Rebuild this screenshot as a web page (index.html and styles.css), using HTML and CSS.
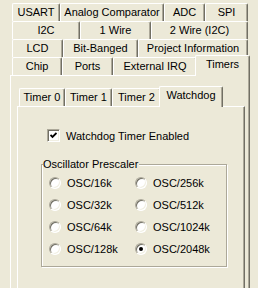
FILE: index.html
```html
<!DOCTYPE html>
<html lang="en">
<head>
    <meta charset="UTF-8">
    <title>Timers</title>
    <link rel="stylesheet" href="styles.css">
</head>
<body>
    <div class="tabs">
        <div class="tab-row row1">
            <div class="tab">USART</div>
            <div class="tab">Analog Comparator</div>
            <div class="tab">ADC</div>
            <div class="tab">SPI</div>
        </div>
        <div class="tab-row row2">
            <div class="tab">I2C</div>
            <div class="tab">1 Wire</div>
            <div class="tab">2 Wire (I2C)</div>
        </div>
        <div class="tab-row row3">
            <div class="tab">LCD</div>
            <div class="tab">Bit-Banged</div>
            <div class="tab">Project Information</div>
        </div>
        <div class="tab-row row4">
            <div class="tab">Chip</div>
            <div class="tab">Ports</div>
            <div class="tab">External IRQ</div>
            <div class="tab tab-active">Timers</div>
        </div>

        <div class="panel">
            <div class="subtabs">
                <div class="tab-row subrow">
                    <div class="tab">Timer 0</div>
                    <div class="tab">Timer 1</div>
                    <div class="tab">Timer 2</div>
                    <div class="tab tab-active">Watchdog</div>
                </div>

                <div class="panel subpanel">
                    <label class="check">
                        <span class="box">
                            <svg width="7" height="7" viewBox="0 0 7 7"><polyline points="0.5,3 2.5,5 6.5,1" fill="none" stroke="#000" stroke-width="1.8"/></svg>
                        </span>
                        Watchdog Timer Enabled
                    </label>

                    <fieldset class="group">
                        <legend>Oscillator Prescaler</legend>
                        <div class="options">
                            <label class="opt"><span class="radio"></span>OSC/16k</label>
                            <label class="opt"><span class="radio"></span>OSC/32k</label>
                            <label class="opt"><span class="radio"></span>OSC/64k</label>
                            <label class="opt"><span class="radio"></span>OSC/128k</label>
                            <label class="opt"><span class="radio"></span>OSC/256k</label>
                            <label class="opt"><span class="radio"></span>OSC/512k</label>
                            <label class="opt"><span class="radio"></span>OSC/1024k</label>
                            <label class="opt"><span class="radio on"></span>OSC/2048k</label>
                        </div>
                    </fieldset>
                </div>
            </div>
        </div>
    </div>
</body>
</html>
```

FILE: styles.css
```css
body {
    margin: 0;
    height: 288px;
    overflow: hidden;
    background: #ece9d8;
    color: #000;
    font-family: "Liberation Sans", Arial, sans-serif;
    font-size: 11px;
}

.tabs {
    margin-left: 10px;
    width: 240px;
    padding-top: 3px;
}

.tab-row {
    display: grid;
    height: 18px;
    margin: 0 2px;
}

.row1 { grid-template-columns: 48px 104px 41px 43px; }
.row2 { grid-template-columns: 68px 71px 97px; }
.row3 { grid-template-columns: 51px 75px 110px; }
.row4 { grid-template-columns: 50px 51px 84px 51px; }

.tab {
    box-sizing: border-box;
    height: 18px;
    background: #ece9d8;
    border-top: 1px solid #fff;
    border-left: 1px solid #fff;
    border-right: 1px solid #716f64;
    border-radius: 2px 2px 0 0;
    box-shadow: inset -1px 0 #aca899;
    text-align: center;
    line-height: 16px;
    white-space: nowrap;
}

.tab-active {
    position: relative;
    z-index: 1;
    height: 21px;
    margin: -2px -2px -1px;
    line-height: 17px;
}

.panel {
    box-sizing: border-box;
    height: 213px;
    border-top: 1px solid #fff;
    border-left: 1px solid #fff;
    border-right: 1px solid #716f64;
    box-shadow: inset -1px 0 #aca899;
}

.subtabs {
    width: 228px;
    margin: 12px 0 0 6px;
}

.subrow {
    grid-template-columns: 46px 47px 49px 60px;
    justify-content: start;
}

.subpanel {
    height: 182px;
    padding-top: 22px;
}

.check {
    display: flex;
    align-items: center;
    gap: 6px;
    margin-left: 29px;
    height: 13px;
}

.box {
    box-sizing: border-box;
    width: 13px;
    height: 13px;
    display: flex;
    align-items: center;
    justify-content: center;
    background: #fff;
    border: 1px solid;
    border-color: #aca899 #fff #fff #aca899;
    box-shadow: inset 1px 1px 0 #716f64, inset -1px -1px 0 #f1efe2;
}

.group {
    box-sizing: border-box;
    width: 186px;
    height: 109px;
    margin: 16px 0 0 23px;
    padding: 0;
    border: 1px solid #aca899;
    box-shadow: 1px 1px 0 #fff, inset 1px 1px 0 #fff;
}

.group legend {
    margin-left: 1px;
    padding: 0 1px 0 0;
    line-height: 13px;
    background: #ece9d8;
}

.options {
    display: grid;
    grid-template-columns: 86px 1fr;
    grid-template-rows: repeat(4, 22px);
    grid-auto-flow: column;
    padding: 1px 0 0 7px;
}

.opt {
    display: flex;
    align-items: center;
    gap: 6px;
}

.radio {
    position: relative;
    box-sizing: border-box;
    width: 12px;
    height: 12px;
    border-radius: 50%;
    background: #fff;
    border: 1px solid;
    border-color: #aca899 #fff #fff #aca899;
    box-shadow: inset 1px 1px 0 #716f64, inset -1px -1px 0 #f1efe2;
}

.radio.on::after {
    content: "";
    position: absolute;
    left: 3px;
    top: 3px;
    width: 4px;
    height: 4px;
    border-radius: 50%;
    background: #000;
}
```
